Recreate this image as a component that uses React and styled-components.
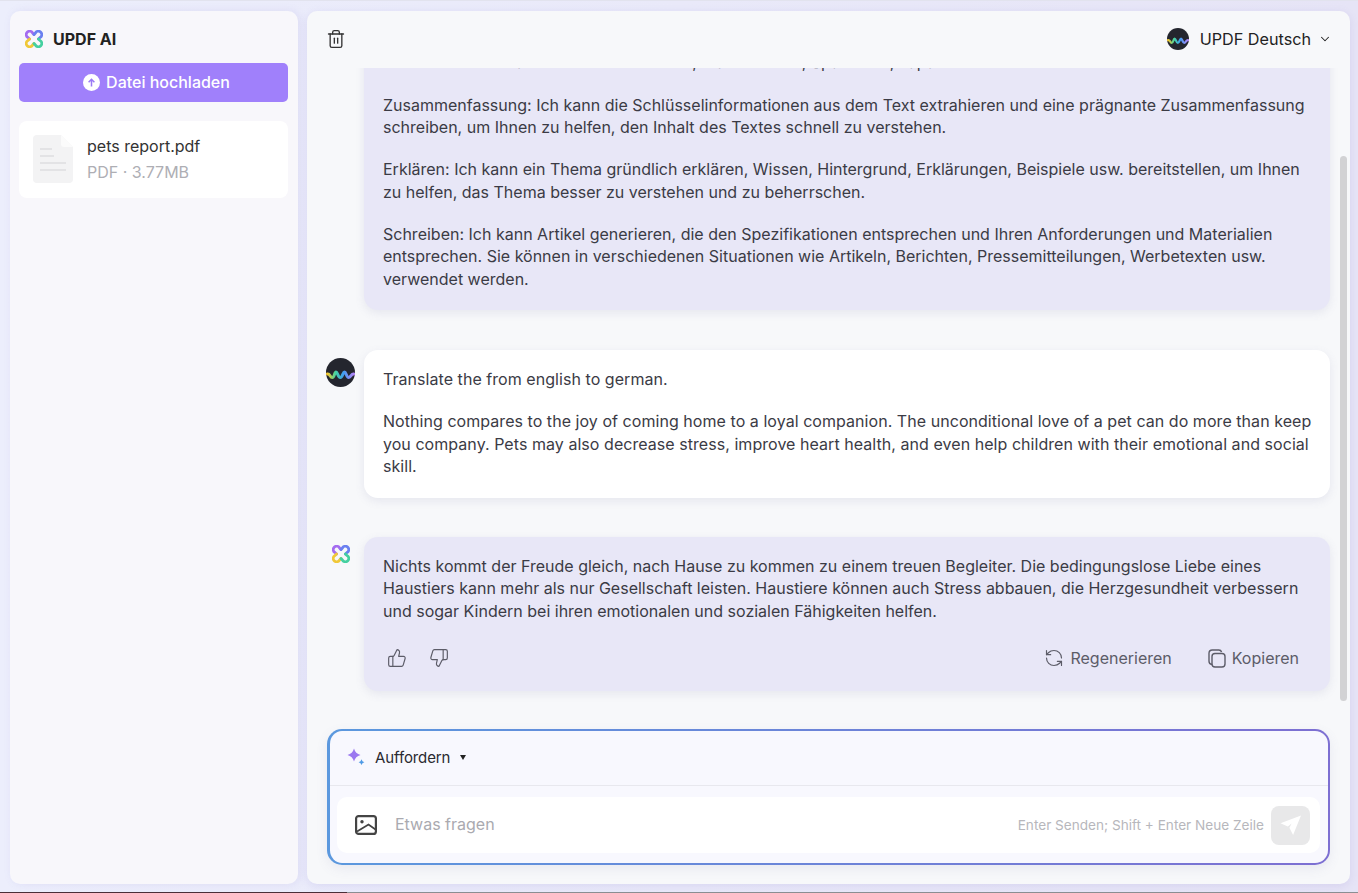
import React from 'react'
import styled, { createGlobalStyle } from 'styled-components'
import { Trash2, ChevronDown, ThumbsUp, ThumbsDown, RefreshCcw } from 'lucide-react'

const GlobalStyle = createGlobalStyle`
  html, body {
    margin: 0;
    height: 100%;
    background: #e8e7f8;
    font-family: Inter, "Liberation Sans", sans-serif;
    overflow: hidden;
  }
`

const Page = styled.div`
  height: 893px;
  box-sizing: border-box;
  display: flex;
  flex-direction: column;
  background: linear-gradient(90deg, #eceefc, #e6e4f6);
  border-top: 1px solid #e2e3ee;
`

const Panels = styled.div`
  flex: 1;
  min-height: 0;
  display: flex;
  gap: 9px;
  padding: 10px 8px 8px 10px;
`

const BottomEdge = styled.div`
  height: 1px;
  background: linear-gradient(90deg, #4a2f38 0 347px, #8b8f93 347px);
`

const Sidebar = styled.aside`
  width: 288px;
  box-sizing: border-box;
  padding: 0 10px 0 9px;
  background: #f8f7fb;
  border-radius: 10px;
  box-shadow: 2px 0 8px rgba(120, 110, 200, 0.12);
`

const Brand = styled.div`
  height: 52px;
  display: flex;
  align-items: center;
  gap: 10px;
  padding: 4px 0 0 6px;
  box-sizing: border-box;
  font-size: 16px;
  font-weight: 700;
  color: #222;
`

const UploadButton = styled.button`
  width: 100%;
  height: 39px;
  display: flex;
  align-items: center;
  justify-content: center;
  gap: 6px;
  padding: 0 0 1px 6px;
  border: 0;
  border-radius: 5px;
  background: #a080fb;
  color: #fff;
  font: 500 16px Inter, sans-serif;
`

const FileCard = styled.div`
  margin-top: 19px;
  height: 77px;
  box-sizing: border-box;
  display: flex;
  align-items: center;
  gap: 14px;
  padding: 0 0 2px 14px;
  background: #fff;
  border-radius: 8px;
`

const FileName = styled.div`
  font-size: 16px;
  line-height: 22px;
  color: #333;
`

const FileMeta = styled.div`
  margin-top: 4px;
  font-size: 16px;
  line-height: 22px;
  color: #aeaeb4;
`

const Main = styled.main`
  position: relative;
  flex: 1;
  min-width: 0;
  display: flex;
  flex-direction: column;
  background: #f7f8fa;
  border-radius: 10px;
  box-shadow: 0 2px 8px rgba(120, 110, 200, 0.15);
  overflow: hidden;
`

const Header = styled.header`
  height: 57px;
  flex: none;
  box-sizing: border-box;
  display: flex;
  align-items: center;
  justify-content: space-between;
  padding: 0 18px 2px 19px;
  color: #222;
`

const IconButton = styled.span`
  display: inline-flex;
  color: ${p => p.$color || '#333'};
`

const ModelPicker = styled.div`
  display: flex;
  align-items: center;
  font-size: 16.2px;
`

const ModelName = styled.span`
  margin: 0 7px 0 11px;
`

const Messages = styled.div`
  flex: 1;
  min-height: 0;
  overflow: hidden;
  display: flex;
  flex-direction: column;
  justify-content: flex-end;
  gap: 40px;
  padding: 0 20px 38px 19px;
`

const Row = styled.div`
  flex: none;
  display: flex;
  gap: 9px;
  &:last-child {
    margin-top: -1px;
  }
`

const AvatarSlot = styled.div`
  width: 29px;
  flex: none;
  padding-top: 8px;
  display: flex;
  justify-content: center;
`

const Bubble = styled.div`
  flex: 1;
  box-sizing: border-box;
  padding: 18px ${p => (p.$user ? '14px' : '19px')} 20px 19px;
  border-radius: ${p => (p.$clipped ? '0 0 14px 14px' : '14px')};
  background: ${p => (p.$user ? '#fff' : '#e8e7f7')};
  box-shadow: 0 3px 10px rgba(110, 105, 160, 0.12);
  font-size: 16px;
  line-height: 22.5px;
  letter-spacing: ${p => (p.$user ? '0.05px' : '0')};
  color: #3b3b45;
`

const Para = styled.p`
  margin: 0 0 19.5px;
  &:last-child {
    margin-bottom: 0;
  }
`

const ClippedPara = styled(Para)`
  margin-bottom: 20.5px;
`

const Actions = styled.div`
  margin: 24px 12px 1px 4px;
  height: 24px;
  display: flex;
  align-items: center;
  color: #5c5c68;
`

const Vote = styled.span`
  display: inline-flex;
  margin-right: 22px;
`

const ActionLink = styled.span`
  display: flex;
  align-items: center;
  gap: 6px;
  margin-left: ${p => (p.$first ? 'auto' : '36px')};
`

const Composer = styled.div`
  flex: none;
  height: 136px;
  box-sizing: border-box;
  margin: 0 20px 19px;
  border: 2px solid transparent;
  border-left-width: 3px;
  border-radius: 15px;
  background:
    linear-gradient(#f8f8fe, #f8f8fe) padding-box,
    linear-gradient(90deg, #5b98de, #7d6fd2) border-box;
  display: flex;
  flex-direction: column;
  box-shadow: 0 4px 12px rgba(110, 105, 160, 0.1);
`

const PromptBar = styled.div`
  height: 55px;
  flex: none;
  box-sizing: border-box;
  display: flex;
  align-items: center;
  padding: 0 0 2px 16px;
  border-bottom: 1px solid #e8e8ee;
  font-size: 15px;
  letter-spacing: -0.1px;
  color: #2a2a30;
`

const PromptLabel = styled.span`
  margin: 0 10px 0 9px;
`

const Caret = styled.span`
  width: 0;
  height: 0;
  border-left: 3.5px solid transparent;
  border-right: 3.5px solid transparent;
  border-top: 5px solid #222;
`

const InputBox = styled.div`
  margin: 11px 8px 0 7px;
  height: 56px;
  display: flex;
  align-items: center;
  padding: 0 10px 0 18px;
  background: #fff;
  border-radius: 10px;
`

const Placeholder = styled.span`
  margin: 0 0 2px 18px;
  font-size: 16px;
  color: #aaaab0;
`

const Hint = styled.span`
  margin-left: auto;
  font-size: 13.6px;
  color: #b7b7bc;
`

const SendButton = styled.span`
  width: 39px;
  height: 39px;
  margin-left: 7px;
  display: flex;
  align-items: center;
  justify-content: center;
  background: #e8e8e9;
  border-radius: 8px;
`

const ScrollThumb = styled.div`
  position: absolute;
  top: 145px;
  right: 3px;
  width: 7px;
  height: 545px;
  background: #d2d2d4;
  border-radius: 4px;
`

const Logo = ({ size = 18 }) => (
  <svg width={size} height={size} viewBox="0 0 18 18" fill="none" strokeWidth="2.8" strokeLinecap="round" strokeLinejoin="round">
    <path d="M9 4.500 7.600 3A3.400 3.400 0 1 0 3 7.600L4.500 9" stroke="#a46cf0" />
    <path d="M9 4.500 10.400 3A3.400 3.400 0 1 1 15 7.600L13.500 9" stroke="#6a80f0" />
    <path d="M4.500 9 3 10.400A3.400 3.400 0 1 0 7.600 15L9 13.500" stroke="#f0c838" />
    <path d="M13.500 9 15 10.400A3.400 3.400 0 1 1 10.400 15L9 13.500" stroke="#45d0a0" />
  </svg>
)

const Wave = ({ size = 29, id }) => (
  <svg width={size} height={size} viewBox="0 0 29 29">
    <defs>
      <linearGradient id={id} x1="0" x2="1" y1="0" y2="0">
        <stop offset="0" stopColor="#f5c52c" />
        <stop offset="0.3" stopColor="#45d6a0" />
        <stop offset="0.6" stopColor="#3f9df0" />
        <stop offset="1" stopColor="#b184f5" />
      </linearGradient>
    </defs>
    <circle cx="14.500" cy="14.500" r="14.500" fill="#24262e" />
    <path
      d="M1.500 16c2.500-.6 2.500 3.500 4.800 3.500S8.300 14 10 14s1.900 5.500 4.300 5.500S16.800 14 18.500 14s1.900 5.500 4.200 5.500 2.500-4 5-3.500"
      fill="none"
      stroke={`url(#${id})`}
      strokeWidth="3"
      strokeLinecap="round"
    />
  </svg>
)

const UploadIcon = () => (
  <svg width="17" height="17" viewBox="0 0 17 17">
    <circle cx="8.500" cy="8.500" r="8.500" fill="#fff" />
    <path d="M8.500 12.500v-7M5.600 8.200l2.900-2.900 2.900 2.900" fill="none" stroke="#9a7af5" strokeWidth="1.500" />
  </svg>
)

const DocIcon = () => (
  <svg width="40" height="48" viewBox="0 0 40 48">
    <path d="M4 0h24l12 12v32a4 4 0 0 1-4 4H4a4 4 0 0 1-4-4V4a4 4 0 0 1 4-4z" fill="#f3f3f4" />
    <path d="M28 0l12 12h-9a3 3 0 0 1-3-3z" fill="#fbfbfb" />
    <path d="M7 14h12M7 21h14M7 28h26M7 35h26" stroke="#e3e3e5" strokeWidth="2" />
  </svg>
)

const CopyIcon = () => (
  <svg width="18" height="19" viewBox="0 0 18 19" fill="none" stroke="currentColor" strokeWidth="1.400">
    <rect x="4" y="4.500" width="13" height="13.500" rx="3" />
    <path d="M4 15.500c-1.800-.3-3-1.500-3-3.300V4.300C1 2.400 2.400 1 4.300 1h6.500c1.300 0 2.400.8 2.800 2" />
  </svg>
)

const SparkleIcon = () => (
  <svg width="20" height="20" viewBox="0 0 20 20">
    <path d="M8 1.500Q9.400 6.600 14.500 8 9.400 9.400 8 14.500 6.600 9.400 1.500 8 6.600 6.600 8 1.500z" fill="#9b78f0" />
    <path d="M15.500 12.300Q16 14.700 18.400 15.200 16 15.700 15.500 18.100 15 15.700 12.600 15.200 15 14.700 15.500 12.300z" fill="#4f9be6" />
  </svg>
)

const PictureIcon = () => (
  <svg width="22" height="20" viewBox="0 0 22 20" fill="none" stroke="currentColor" strokeWidth="2.200">
    <rect x="1.100" y="1.100" width="19.800" height="17.800" rx="2.500" />
    <circle cx="7" cy="6.800" r="1.700" fill="currentColor" stroke="none" />
    <path d="M2 16.500 13.500 9.500l7 5" strokeWidth="1.800" />
  </svg>
)

const PlaneIcon = () => (
  <svg width="24" height="24" viewBox="0 0 24 24">
    <path d="M22 2.500 1.500 10.200l7.300 3.400 3.800-3.200-2.200 4.300 3.700 7.300z" fill="#fff" />
  </svg>
)

const App = () => (
  <>
    <GlobalStyle />
    <Page>
      <Panels>
        <Sidebar>
          <Brand>
            <Logo />
            UPDF AI
          </Brand>
          <UploadButton>
            <UploadIcon />
            Datei hochladen
          </UploadButton>
          <FileCard>
            <DocIcon />
            <div>
              <FileName>pets report.pdf</FileName>
              <FileMeta>PDF · 3.77MB</FileMeta>
            </div>
          </FileCard>
        </Sidebar>
        <Main>
          <Header>
            <IconButton>
              <Trash2 size={20} strokeWidth={1.6} />
            </IconButton>
            <ModelPicker>
              <Wave size={22} id="wave-header" />
              <ModelName>UPDF Deutsch</ModelName>
              <ChevronDown size={14} strokeWidth={1.8} />
            </ModelPicker>
          </Header>
          <Messages>
            <Row>
              <AvatarSlot />
              <Bubble $clipped>
                <ClippedPara>Übersetzen: Ich kann Texte ins Deutsche, Französische, Spanische, Japanische usw. übersetzen.</ClippedPara>
                <Para>
                  Zusammenfassung: Ich kann die Schlüsselinformationen aus dem Text extrahieren und eine prägnante Zusammenfassung
                  schreiben, um Ihnen zu helfen, den Inhalt des Textes schnell zu verstehen.
                </Para>
                <Para>
                  Erklären: Ich kann ein Thema gründlich erklären, Wissen, Hintergrund, Erklärungen, Beispiele usw. bereitstellen, um Ihnen
                  zu helfen, das Thema besser zu verstehen und zu beherrschen.
                </Para>
                <Para>
                  Schreiben: Ich kann Artikel generieren, die den Spezifikationen entsprechen und Ihren Anforderungen und Materialien
                  entsprechen. Sie können in verschiedenen Situationen wie Artikeln, Berichten, Pressemitteilungen, Werbetexten usw.
                  verwendet werden.
                </Para>
              </Bubble>
            </Row>
            <Row>
              <AvatarSlot>
                <Wave id="wave-user" />
              </AvatarSlot>
              <Bubble $user>
                <Para>Translate the from english to german.</Para>
                <Para>
                  Nothing compares to the joy of coming home to a loyal companion. The unconditional love of a pet can do more than keep
                  you company. Pets may also decrease stress, improve heart health, and even help children with their emotional and social
                  skill.
                </Para>
              </Bubble>
            </Row>
            <Row>
              <AvatarSlot>
                <Logo />
              </AvatarSlot>
              <Bubble>
                <Para>
                  Nichts kommt der Freude gleich, nach Hause zu kommen zu einem treuen Begleiter. Die bedingungslose Liebe eines
                  Haustiers kann mehr als nur Gesellschaft leisten. Haustiere können auch Stress abbauen, die Herzgesundheit verbessern
                  und sogar Kindern bei ihren emotionalen und sozialen Fähigkeiten helfen.
                </Para>
                <Actions>
                  <Vote>
                    <ThumbsUp size={20} strokeWidth={1.4} />
                  </Vote>
                  <Vote>
                    <ThumbsDown size={20} strokeWidth={1.4} />
                  </Vote>
                  <ActionLink $first>
                    <RefreshCcw size={20} strokeWidth={1.4} />
                    Regenerieren
                  </ActionLink>
                  <ActionLink>
                    <CopyIcon />
                    Kopieren
                  </ActionLink>
                </Actions>
              </Bubble>
            </Row>
          </Messages>
          <Composer>
            <PromptBar>
              <SparkleIcon />
              <PromptLabel>Auffordern</PromptLabel>
              <Caret />
            </PromptBar>
            <InputBox>
              <IconButton $color="#444">
                <PictureIcon />
              </IconButton>
              <Placeholder>Etwas fragen</Placeholder>
              <Hint>Enter Senden; Shift + Enter Neue Zeile</Hint>
              <SendButton>
                <PlaneIcon />
              </SendButton>
            </InputBox>
          </Composer>
          <ScrollThumb />
        </Main>
      </Panels>
      <BottomEdge />
    </Page>
  </>
)

export default App
